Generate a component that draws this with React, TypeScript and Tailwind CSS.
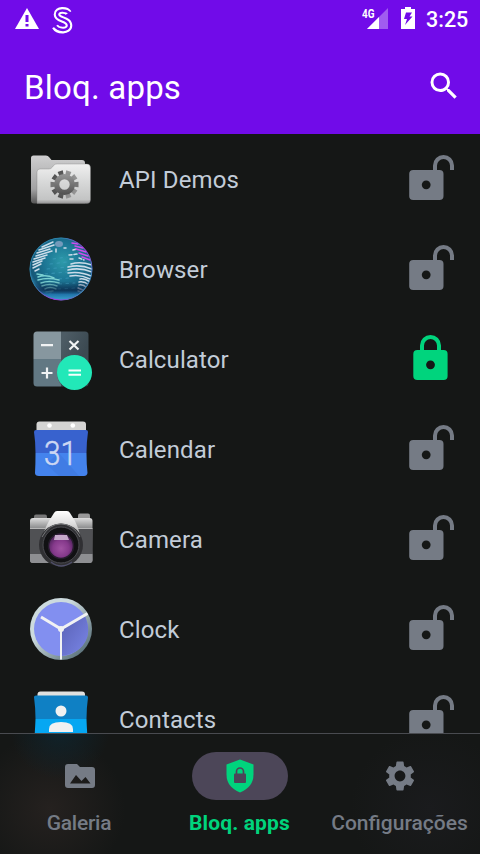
import React from "react";
import { MdSettings, MdSearch } from "react-icons/md";

function FolderIcon() {
  return (
    <svg width="64" height="64" viewBox="0 0 64 64">
      <defs>
        <linearGradient id="fb" x1="0" y1="0" x2="0" y2="1">
          <stop offset="0" stopColor="#cfcfd0" />
          <stop offset=".7" stopColor="#a2a2a3" />
          <stop offset="1" stopColor="#555" />
        </linearGradient>
        <linearGradient id="ff" x1="0" y1="0" x2="0" y2="1">
          <stop offset="0" stopColor="#f0f0f0" />
          <stop offset=".45" stopColor="#d8d9d9" />
          <stop offset=".9" stopColor="#c3c4c4" />
          <stop offset="1" stopColor="#929293" />
        </linearGradient>
        <linearGradient id="fg" x1="0" y1="0" x2="0" y2="1">
          <stop offset="0" stopColor="#969696" />
          <stop offset=".6" stopColor="#6d6d6d" />
          <stop offset="1" stopColor="#505050" />
        </linearGradient>
      </defs>
      <path d="M2 10Q2 7.500 4.500 7.500H17Q19 7.500 20 9L22.500 12H53Q56 12 56 15V55.500H5Q2 55.500 2 52.500Z" fill="url(#fb)" />
      <path d="M8 24Q8 21 11 21H20Q22 21 23.500 19L25 17Q26 16 28 16H58Q61.500 16 61.500 20V51.500Q61.500 55.500 58 55.500H8Z" fill="url(#ff)" stroke="#777" strokeOpacity=".5" strokeWidth=".7" />
      <g fill="url(#fg)">
        {[0, 36, 72, 108, 144].map((angle) => (
          <path key={angle} d="M32.800 22.500H38.200L37.500 29H33.500ZM33.500 44H37.500L38.200 50.500H32.800Z" transform={`rotate(${angle + 18} 35.500 36.500)`} fill={angle === 72 ? "#767676" : "url(#fg)"} />
        ))}
        <path fillRule="evenodd" d="M35.500 26A10.500 10.500 0 1 0 35.500 47 10.500 10.500 0 0 0 35.500 26ZM35.500 31.300A5.200 5.200 0 1 1 35.500 41.700 5.200 5.200 0 0 1 35.500 31.300Z" />
      </g>
    </svg>
  );
}

function BrowserIcon() {
  return (
    <svg width="64" height="64" viewBox="0 0 64 64" className="-mt-[3px]">
      <defs>
        <radialGradient id="globe" cx=".53" cy=".38" r=".62">
          <stop offset="0" stopColor="#2d9aaa" />
          <stop offset=".45" stopColor="#1d7896" />
          <stop offset=".85" stopColor="#155878" />
          <stop offset="1" stopColor="#3790c0" />
        </radialGradient>
        <linearGradient id="globelow" x1="0" y1="0" x2="0" y2="1">
          <stop offset=".7" stopColor="#071e42" stopOpacity="0" />
          <stop offset=".84" stopColor="#071e42" stopOpacity=".65" />
          <stop offset=".91" stopColor="#2175aa" />
          <stop offset="1" stopColor="#3aa0ce" />
        </linearGradient>
        <linearGradient id="globerim" x1="0" y1="0" x2="1" y2=".6">
          <stop offset=".4" stopColor="#2d81a9" />
          <stop offset=".72" stopColor="#b22be0" />
          <stop offset="1" stopColor="#4187bd" />
        </linearGradient>
        <clipPath id="gc"><circle cx="32" cy="32" r="31" /></clipPath>
      </defs>
      <circle cx="32" cy="32" r="31.300" fill="url(#globe)" />
      <g clipPath="url(#gc)" fill="none" strokeLinecap="round">
        <g stroke="#43a2c2" strokeWidth="1.100" strokeDasharray="2.500 4.500" opacity=".6">
          <path d="M24 22L38 20M21 27L38 25M18 32L38 30M16 37L38 35M30 42L40 41M30 47L46 46M29 52L46 51" />
        </g>
        <g stroke="#cbdce9" strokeWidth="1.500">
          <path d="M13 10L24 5M10 13L25 8M8 16L21 12M7 19L23 14M5 22L18 18M4 25L16 21M4 28L13 24M4 31L12 27M6 34L10 32" />
          <path d="M42 27Q51 24 63 28M39 30Q51 27 63 32M39 33Q51 30 63 35M39 36Q51 34 62 39M41 39Q51 37 61 42M51 42Q55 41 61 45M50 45Q55 44 60 48M50 48Q54 47 58 51M49 51L56 54M49 54L54 56" />
          <path d="M44 13L48 12M40 18L49 17M41 22H46M50 21L55 23M27 12V15M35 11L37 11" strokeDasharray="3 2" />
        </g>
        <g stroke="#7acfd0" strokeWidth="1.500">
          <path d="M8 37L14 38M9 40Q17 37 25 41M9 43Q19 40 30 43M12 46Q20 43 30 46M13 49Q21 46 28 49M16 52Q21 49 27 52M17 55L24 54M19 58L22 56" />
        </g>
        <path d="M43 6L49 7M46 9L54 11M47 12L57 15M50 16L59 19M53 20L61 23" stroke="#cf4ced" strokeWidth="1.500" />
        <ellipse cx="30" cy="7" rx="4" ry="3" fill="#739abb" />
      </g>
      <circle cx="32" cy="32" r="31" fill="url(#globelow)" stroke="url(#globerim)" strokeWidth="1" />
    </svg>
  );
}

function CalculatorIcon() {
  return (
    <svg width="64" height="64" viewBox="0 0 64 64">
      <defs>
        <clipPath id="cc"><rect x="4.500" y="3.500" width="55" height="55" rx="3.500" /></clipPath>
        <linearGradient id="cx" x1="0" y1="0" x2="1" y2="1">
          <stop offset=".1" stopColor="#4d5c65" /><stop offset=".6" stopColor="#3c4a52" />
        </linearGradient>
      </defs>
      <g clipPath="url(#cc)">
        <rect x="4" y="3" width="28" height="28" fill="#87979f" />
        <rect x="32" y="3" width="28" height="56" fill="url(#cx)" />
        <rect x="4" y="31" width="28" height="28" fill="#627883" />
      </g>
      <path d="M12 17.200H24M40.500 13L49.500 21.500M49.500 13L40.500 21.500M12.500 45H23.500M18 39.500V50.500" stroke="#f1f3f4" strokeWidth="2.200" />
      <circle cx="45.500" cy="45.500" r="17.500" fill="#142923" opacity=".3" />
      <circle cx="45.500" cy="44.500" r="17.500" fill="#22e8b8" />
      <path d="M39.500 42.500H52M39.500 46.800H52" stroke="#f4fffc" strokeWidth="2" />
    </svg>
  );
}

function CalendarIcon() {
  return (
    <svg width="64" height="64" viewBox="0 0 64 64">
      <rect x="7.500" y="3.500" width="49.500" height="20" rx="3" fill="#d4d4d3" />
      <path d="M5 14Q5 12 7 12H57Q59 12 59 14Q57.500 24 57.500 35H6.500Q6.500 24 5 14Z" fill="#3862ce" />
      <path d="M6.500 35H57.500Q57.500 46 58.500 55Q58 58 55 58H10Q6 58 6 55Q6.500 46 6.500 35Z" fill="#4483ed" />
      <path d="M17 46L30 58H50L30 35Z" fill="#3468cb" opacity=".25" />
      <circle cx="20.500" cy="7.500" r="2.300" fill="#fff" /><circle cx="43.800" cy="7.500" r="2.300" fill="#fff" />
      <text x="31.500" y="46.500" textAnchor="middle" fill="#cdd7f3" stroke="#cdd7f3" strokeWidth=".6" fontFamily="Roboto, sans-serif" fontSize="33" fontWeight="300" textLength="33" lengthAdjust="spacingAndGlyphs">31</text>
    </svg>
  );
}

function CameraIcon() {
  return (
    <svg width="64" height="64" viewBox="0 0 64 64">
      <defs>
        <linearGradient id="cb" x1="0" y1="0" x2="0" y2="1"><stop stopColor="#ddd" /><stop offset=".25" stopColor="#838485" /><stop offset=".7" stopColor="#4b4c4e" /><stop offset="1" stopColor="#9a9b9e" /></linearGradient>
        <linearGradient id="ct" x1="0" y1="0" x2="0" y2="1"><stop stopColor="#fff" /><stop offset=".35" stopColor="#ddd" /><stop offset="1" stopColor="#666" /></linearGradient>
        <radialGradient id="cl" cy=".6"><stop stopColor="#a052a2" /><stop offset=".65" stopColor="#85398b" /><stop offset="1" stopColor="#5b2866" /></radialGradient>
      </defs>
      <rect x="5" y="6.500" width="13" height="6" rx="2" fill="#777" />
      <rect x="49" y="5.500" width="12" height="7" rx="2" fill="#999" />
      <rect x="1" y="10" width="62.500" height="45" rx="3" fill="url(#cb)" />
      <rect x="1" y="21" width="62.500" height="25" fill="#505154" />
      <path d="M1 46H63.500V52Q63.500 55 60 55H4Q1 55 1 52Z" fill="#8e8f92" />
      <path d="M1 20.500H16M48 20.500H63.500" stroke="#b7b7b7" />
      <path d="M11 40Q13 25 20 13L25 5Q26 3 28 3H38Q40 3 41 5L46 13Q52 25 53 40Z" fill="url(#ct)" />
      <ellipse cx="32" cy="37" rx="22" ry="21.500" fill="#303033" />
      <path d="M13 29Q20 16 32 16Q44 16 51 29" fill="none" stroke="#77787b" />
      <circle cx="32" cy="37" r="18" fill="#111113" stroke="#4b4b50" />
      <circle cx="32" cy="38" r="12.500" fill="url(#cl)" stroke="#251c2c" strokeWidth="1.500" />
      <path d="M26 27H38L40 32H25Z" fill="#c5a8ca" />
      <path d="M22 54Q32 62 43 54" fill="none" stroke="#50506c" strokeWidth="1.300" />
    </svg>
  );
}

function ClockIcon() {
  return (
    <svg width="64" height="64" viewBox="0 0 64 64">
      <defs>
        <linearGradient id="ck" x1="0" y1="0" x2="1" y2="1"><stop offset=".35" stopColor="#ccdade" /><stop offset="1" stopColor="#405a64" /></linearGradient>
        <linearGradient id="cs" x1="0" y1="0" x2="1" y2="1"><stop stopColor="#5961b5" /><stop offset="1" stopColor="#7a86e7" /></linearGradient>
      </defs>
      <circle cx="32" cy="31" r="31" fill="url(#ck)" />
      <circle cx="32" cy="31" r="27" fill="#828ff0" />
      <path d="M32 32L56 18Q65 40 49 52Q42 57 32 58Z" fill="url(#cs)" />
      <path d="M12 19L32 31L58.500 15.500" fill="none" stroke="#f1f2f3" strokeWidth="3" />
      <path d="M32 31V61.500" stroke="#f1f2f3" strokeWidth="2" />
      <circle cx="32" cy="31" r="3" fill="#f1f2f3" />
    </svg>
  );
}

function ContactsIcon() {
  return (
    <svg width="64" height="64" viewBox="0 0 64 64">
      <rect x="8.500" y="3.500" width="47.500" height="12" rx="3" fill="#e0e0df" />
      <path d="M5 9Q5 7.500 7 7.500H57Q59 7.500 59 9.500Q57.500 20 57.500 31H6.500Q6.500 20 5 9Z" fill="#0f80c4" />
      <path d="M6.500 31H57.500Q58 45 59 56H5Q6 43 6.500 31Z" fill="#06a7f2" />
      <circle cx="32" cy="23" r="5.500" fill="#f1f1f1" />
      <path d="M20 44V41Q20 34 32 34Q44 34 44 41V44Z" fill="#f1f1f1" />
    </svg>
  );
}

function LockIcon({ locked }: { locked?: boolean }) {
  return (
    <svg width="45" height="45" viewBox="0 0 45 45" className={locked ? "text-[#00d47d]" : "text-[#757b85]"}>
      <path
        d={locked ? "M13 16V10.500a8.500 8.500 0 0 1 17 0V16" : "M26 16V10.500a8.500 8.500 0 0 1 17 0V15"}
        fill="none" stroke="currentColor" strokeWidth="4"
      />
      <rect x={locked ? 4.3 : 0.2} y="15" width="34.300" height="30" rx="4" fill="currentColor" />
      <circle cx={locked ? 21.500 : 17.200} cy="29.800" r="4.400" fill="#151716" />
    </svg>
  );
}

const apps = [
  { name: "API Demos", icon: <FolderIcon /> },
  { name: "Browser", icon: <BrowserIcon /> },
  { name: "Calculator", icon: <CalculatorIcon />, locked: true },
  { name: "Calendar", icon: <CalendarIcon /> },
  { name: "Camera", icon: <CameraIcon /> },
  { name: "Clock", icon: <ClockIcon /> },
  { name: "Contacts", icon: <ContactsIcon /> },
];

function StatusBar() {
  return (
    <div className="flex h-10 items-center text-white">
      <svg width="24" height="21" viewBox="0 0 24 21" className="ml-[15px] -mt-[3px]">
        <path d="M12 0L24 21H0Z" fill="white" />
        <path d="M10.500 7H13.500V14H10.500ZM10.500 16H13.500V18.500H10.500Z" fill="#710be9" />
      </svg>
      <svg width="22" height="28" viewBox="0 0 22 28" className="ml-[13px] -mt-px">
        <path d="M16.500 7C14.500 3.500 5 3 5 8.500C5 14.500 17 12.500 17 19.500C17 25.500 6 25.500 3 20.500" fill="none" stroke="white" strokeWidth="6.600" />
        <path d="M18 7.500C14.500 3.500 5 3 5 8.500C5 14.500 17 12.500 17 19.500C17 25.500 6 25.500 2 19" fill="none" stroke="#710be9" strokeWidth="2.400" />
      </svg>
      <svg width="27" height="23" viewBox="0 0 27 23" className="ml-auto -mt-[3px]">
        <path d="M26 1V22H5Z" fill="#a05df0" />
        <path d="M5 22L17 10V22Z" fill="white" />
        <text x="0" y="10.500" fill="white" fontFamily="Roboto, sans-serif" fontSize="12" fontWeight="700" textLength="12.500" lengthAdjust="spacingAndGlyphs">4G</text>
      </svg>
      <svg width="14" height="22" viewBox="0 0 14 22" className="ml-[12px] -mt-[4px]">
        <path d="M4 0H10V2H14V22H0V2H4Z" fill="white" />
        <path d="M5 5.500H11L8.500 9.500H11.500L4 18L6 12H3Z" fill="#710be9" />
      </svg>
      <span className="ml-[11px] mr-[12px] w-[42px] text-[21.500px] font-medium leading-none">3:25</span>
    </div>
  );
}

export default function App() {
  return (
    <div className="flex h-[854px] w-[480px] flex-col overflow-hidden bg-[#151716] font-[Roboto,sans-serif]">
      <header className="h-[134px] shrink-0 bg-[#710be9]">
        <StatusBar />
        <div className="flex h-[94px] items-center justify-between pl-6 pr-[18px] text-white">
          <h1 className="text-[33px] leading-none tracking-[0.2px]">Bloq. apps</h1>
          <MdSearch size={36} className="-mt-[2px]" />
        </div>
      </header>
      <main className="h-[599px] shrink-0 overflow-hidden pt-px">
        {apps.map((app) => (
          <div key={app.name} className="flex h-[90px] items-center pl-[29px] pr-[26px]">
            {app.icon}
            <span className="ml-[26px] flex-1 text-[24px] tracking-[0.12px] text-[#c2ccd8]">{app.name}</span>
            <div className="-mt-[5px]"><LockIcon locked={app.locked} /></div>
          </div>
        ))}
      </main>
      <nav className="grid h-[121px] shrink-0 grid-cols-3 border-t border-[#494b50] bg-[radial-gradient(circle_at_60px_-5px,#10232b_0px,transparent_50px),radial-gradient(circle_at_50px_75px,#25211f_0px,transparent_75px),radial-gradient(circle_at_430px_75px,#1a1b1d_0px,transparent_80px)] pt-[18px] text-[21px] font-medium text-[#757b85]">
        <div className="flex flex-col items-center">
          <span className="flex h-12 w-24 items-center justify-center">
            <svg width="30" height="24" viewBox="0 0 30 24">
              <path fillRule="evenodd" fill="currentColor" d="M3 0H12L15 3H27Q30 3 30 6V21Q30 24 27 24H3Q0 24 0 21V3Q0 0 3 0ZM5 19.500H25.500L20.500 13L16.500 17L11 11Z" />
            </svg>
          </span>
          <span className="mt-[11px] -ml-[2px] leading-6 tracking-[-0.25px]">Galeria</span>
        </div>
        <div className="flex flex-col items-center">
          <span className="flex h-12 w-24 items-center justify-center rounded-full bg-[#4c4658]">
            <svg width="28" height="34" viewBox="0 0 28 34">
              <path d="M14 0.500L27.500 5.500V15.500Q27.500 28 14 33.500Q0.500 28 0.500 15.500V5.500Z" fill="#00d47d" />
              <path d="M10.500 15V12.500a3.500 3.500 0 0 1 7 0V15" fill="none" stroke="#4c4658" strokeWidth="1.700" />
              <rect x="8" y="14.500" width="12" height="9.500" rx="1" fill="#4c4658" />
            </svg>
          </span>
          <span className="mt-[11px] -ml-px font-bold leading-6 tracking-[0.12px] text-[#00d47d]">Bloq. apps</span>
        </div>
        <div className="flex flex-col items-center">
          <span className="flex h-12 w-24 items-center justify-center"><MdSettings size={36} /></span>
          <span className="mt-[11px] -ml-px leading-6">Configurações</span>
        </div>
      </nav>
    </div>
  );
}
